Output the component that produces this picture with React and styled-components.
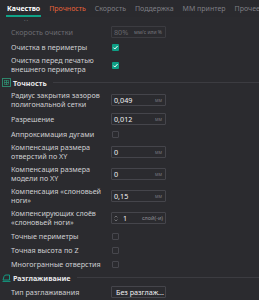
import styled, { createGlobalStyle } from "styled-components";

const GlobalStyle = createGlobalStyle`
  html, body {
    margin: 0;
    padding: 0;
    background: #2b2b2f;
  }
  body {
    font-family: "Noto Sans", "Open Sans", sans-serif;
    -webkit-font-smoothing: antialiased;
  }
`;

const tabs = [
  { label: "Качество", active: true },
  { label: "Прочность", modified: true },
  { label: "Скорость" },
  { label: "Поддержка" },
  { label: "MM принтер" },
  { label: "Прочее" },
];

function Check({ checked }) {
  return (
    <Box checked={checked}>
      {checked && (
        <svg width="7" height="7" viewBox="0 0 7 7">
          <path d="M1.4 3.6 L2.8 5 L5.6 2" stroke="#fff" strokeWidth="1" fill="none" />
        </svg>
      )}
    </Box>
  );
}

function Field({ value, unit, disabled }) {
  return (
    <Input disabled={disabled}>
      <Value disabled={disabled}>{value}</Value>
      <Unit disabled={disabled}>{unit}</Unit>
    </Input>
  );
}

function Spin({ value, unit }) {
  return (
    <Input>
      <Arrows>
        <svg width="4" height="7" viewBox="0 0 4 7">
          <path d="M0.5 2.5 L2 1 L3.5 2.5 M0.5 4.5 L2 6 L3.5 4.5" stroke="#8a8a8e" strokeWidth="0.7" fill="none" />
        </svg>
      </Arrows>
      <Value>{value}</Value>
      <SpinUnit>{unit}</SpinUnit>
    </Input>
  );
}

function Select({ value }) {
  return (
    <Input>
      <svg width="5" height="4" viewBox="0 0 5 4">
        <path d="M0.5 1 L2.5 3 L4.5 1" stroke="#9a9a9e" strokeWidth="0.7" fill="none" />
      </svg>
      <SelectText>{value}</SelectText>
    </Input>
  );
}

function Row({ lines, disabled, children, tall }) {
  return (
    <RowWrap tall={tall}>
      <Label disabled={disabled}>
        {lines.map((l, i) => (
          <span key={i}>{l}</span>
        ))}
      </Label>
      <Control>{children}</Control>
    </RowWrap>
  );
}

function PrecisionIcon() {
  return (
    <svg width="9" height="9" viewBox="0 0 9 9">
      <rect x="0.5" y="0.5" width="8" height="8" fill="none" stroke="#2f8f72" strokeWidth="0.9" />
      <path d="M4.5 2 V7 M2 4.5 H7" stroke="#2f8f72" strokeWidth="0.8" />
      <rect x="2.5" y="2.5" width="4" height="4" fill="none" stroke="#2f8f72" strokeWidth="0.6" />
    </svg>
  );
}

function IronIcon() {
  return (
    <svg width="9" height="9" viewBox="0 0 9 9">
      <path d="M1 7 L2 3.5 Q2.5 2 4 2 L7.5 2 L7.5 7 Z" fill="none" stroke="#12a58a" strokeWidth="0.9" />
      <path d="M0.5 8.4 H8.5" stroke="#12a58a" strokeWidth="0.9" />
    </svg>
  );
}

export default function App() {
  return (
    <>
      <GlobalStyle />
      <Page>
        <TabBar>
          {tabs.map((t) => (
            <Tab key={t.label} active={t.active} modified={t.modified}>
              {t.label}
            </Tab>
          ))}
        </TabBar>
        <Dots>• •</Dots>

        <Row lines={["Скорость очистки"]} disabled>
          <Field value="80%" unit="мм/с или %" disabled />
        </Row>
        <Row lines={["Очистка в периметры"]}>
          <Check checked />
        </Row>
        <Row lines={["Очистка перед печатью", "внешнего периметра"]}>
          <Check checked />
        </Row>

        <Header>
          <PrecisionIcon />
          <HeaderTitle>Точность</HeaderTitle>
          <HeaderLine />
        </Header>
        <Row lines={["Радиус закрытия зазоров", "полигональной сетки"]}>
          <Field value="0,049" unit="мм" />
        </Row>
        <Row lines={["Разрешение"]} tall>
          <Field value="0,012" unit="мм" />
        </Row>
        <Row lines={["Аппроксимация дугами"]}>
          <Check />
        </Row>
        <Row lines={["Компенсация размера", "отверстий по XY"]}>
          <Field value="0" unit="мм" />
        </Row>
        <Row lines={["Компенсация размера", "модели по XY"]}>
          <Field value="0" unit="мм" />
        </Row>
        <Row lines={["Компенсация «слоновьей", "ноги»"]}>
          <Field value="0,15" unit="мм" />
        </Row>
        <Row lines={["Компенсирующих слоёв", "«слоновьей ноги»"]}>
          <Spin value="1" unit="слой(-и)" />
        </Row>
        <Row lines={["Точные периметры"]}>
          <Check />
        </Row>
        <Row lines={["Точная высота по Z"]}>
          <Check />
        </Row>
        <Row lines={["Многогранные отверстия"]}>
          <Check />
        </Row>

        <Header>
          <IronIcon />
          <HeaderTitle>Разглаживание</HeaderTitle>
          <HeaderLine />
        </Header>
        <Row lines={["Тип разглаживания"]} tall>
          <Select value="Без разглаж..." />
        </Row>
      </Page>
    </>
  );
}

const Page = styled.div`
  width: 259px;
  height: 300px;
  overflow: hidden;
  background: #2b2b2f;
  color: #cfcfd2;
  font-size: 7.2px;
`;

const TabBar = styled.div`
  display: flex;
  gap: 7px;
  height: 17px;
  padding-left: 6px;
  white-space: nowrap;
  background: #2a2a2e;
`;

const Tab = styled.div`
  display: flex;
  align-items: center;
  height: 17px;
  box-sizing: border-box;
  padding: 1px 1px 0;
  font-size: 7px;
  font-weight: ${(p) => (p.active ? 700 : 400)};
  color: ${(p) => (p.active ? "#ffffff" : p.modified ? "#e5623a" : "#7e7e84")};
  border-bottom: 2px solid ${(p) => (p.active ? "#0fa387" : "transparent")};
`;

const Dots = styled.div`
  height: 7px;
  line-height: 7px;
  padding-left: 24px;
  font-size: 4px;
  color: #66666c;
`;

const RowWrap = styled.div`
  display: flex;
  align-items: center;
  box-sizing: border-box;
  min-height: ${(p) => (p.tall ? 16 : 14)}px;
  padding: 2px 0;
`;

const Label = styled.div`
  width: 100px;
  padding-left: 11px;
  box-sizing: border-box;
  display: flex;
  flex-direction: column;
  line-height: 9px;
  color: ${(p) => (p.disabled ? "#6c6c72" : "#cfcfd2")};
  white-space: nowrap;
`;

const Control = styled.div`
  flex: 1;
  display: flex;
  align-items: center;
  padding-left: 11px;
`;

const Box = styled.div`
  width: 7px;
  height: 7px;
  box-sizing: border-box;
  border-radius: 1px;
  display: flex;
  align-items: center;
  justify-content: center;
  background: ${(p) => (p.checked ? "#0e9e85" : "transparent")};
  border: ${(p) => (p.checked ? "none" : "1px solid #47474d")};
  margin-left: 1px;
`;

const Input = styled.div`
  width: 55px;
  height: 12px;
  box-sizing: border-box;
  border: 1px solid ${(p) => (p.disabled ? "#3c3c41" : "#45454b")};
  border-radius: 1px;
  display: flex;
  align-items: center;
  gap: 2px;
  padding: 0 2px 0 2px;
`;

const Value = styled.span`
  flex: 1;
  font-size: 7.2px;
  color: ${(p) => (p.disabled ? "#66666c" : "#f2f2f4")};
`;

const Unit = styled.span`
  font-size: ${(p) => (p.disabled ? 5 : 4.5)}px;
  color: ${(p) => (p.disabled ? "#76767c" : "#7a7a80")};
  padding-right: 1px;
`;

const SpinUnit = styled.span`
  font-size: 5.5px;
  color: #8e8e94;
`;

const Arrows = styled.span`
  display: flex;
  align-items: center;
  width: 7px;
`;

const SelectText = styled.span`
  font-size: 7.2px;
  color: #f0f0f2;
  white-space: nowrap;
`;

const Header = styled.div`
  display: flex;
  align-items: center;
  height: 13px;
  padding-left: 2px;
  gap: 2px;
`;

const HeaderTitle = styled.span`
  font-weight: 700;
  font-size: 7.2px;
  color: #e6e6e8;
  white-space: nowrap;
`;

const HeaderLine = styled.div`
  flex: 1;
  height: 1px;
  margin-left: 4px;
  background: #3c3c41;
`;
